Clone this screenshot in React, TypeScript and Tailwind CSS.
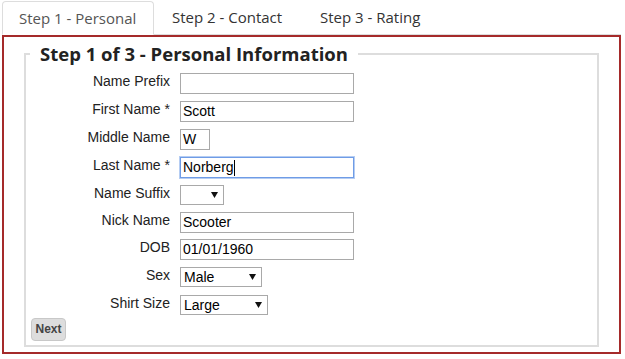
import { ReactNode } from 'react';

const arial = { fontFamily: '"Liberation Sans", Arial, sans-serif' };

function Caret() {
  return (
    <svg width="7" height="6" viewBox="0 0 7 6" className="shrink-0">
      <path d="M0 0 H7 L3.5 6 Z" fill="#111" />
    </svg>
  );
}

function Row({ label, h, children }: { label: string; h: string; children: ReactNode }) {
  return (
    <div className={`flex items-start ${h}`}>
      <label className="w-[144px] pr-0 text-right text-[14px] leading-4 text-[#222]">{label}</label>
      <div className="ml-[10px]">{children}</div>
    </div>
  );
}

function TextBox({ value, w, focused }: { value: string; w: string; focused?: boolean }) {
  return (
    <div
      className={`${w} h-[21px] flex items-center pl-[2px] text-[14px] text-black bg-white ${
        focused ? 'border border-[#6f9ce6] shadow-[0_0_0_1px_#b5cdf3]' : 'border border-[#a9a9a9]'
      }`}
    >
      <span>{value}</span>
      {focused && <span className="w-px h-[16px] bg-black" />}
    </div>
  );
}

function SelectBox({ value, w }: { value: string; w: string }) {
  return (
    <div className={`${w} h-[20px] flex items-center justify-between pl-[3px] pr-[5px] border border-[#a9a9a9] bg-white text-[14px] text-black`}>
      <span>{value}</span>
      <Caret />
    </div>
  );
}

export default function App() {
  return (
    <div className="w-[625px] h-[359px] bg-white overflow-hidden">
      <div className="pt-[1px] pl-[2px] pr-[4px]">
        <div className="flex border-b border-[#ddd] h-[34px]" style={{ fontFamily: '"Open Sans", sans-serif' }}>
          <div className="w-[152px] h-[34px] border border-[#ddd] border-b-white rounded-t-[4px] bg-white pl-[16px] text-[15px] leading-[32px] text-[#555]">
            Step 1 - Personal
          </div>
          <div className="w-[148px] ml-[2px] pl-[16px] text-[15px] leading-[32px] text-[#333]">Step 2 - Contact</div>
          <div className="ml-[2px] pl-[14px] text-[15px] leading-[32px] text-[#333]">Step 3 - Rating</div>
        </div>
        <div className="border-2 border-[#a52a2a] h-[319px] px-[20px] pt-[6px]" style={arial}>
          <fieldset className="border-2 border-[#ddd] h-[304px] pl-[4px] pt-[8px]">
            <legend
              className="px-[10px] text-[18.5px] font-bold leading-[22px] text-[#222]"
              style={{ fontFamily: '"Open Sans", sans-serif' }}
            >
              Step 1 of 3 - Personal Information
            </legend>
            <div className="flex flex-col -ml-[4px]">
              <Row label="Name Prefix" h="h-[28px]"><TextBox value="" w="w-[174px]" /></Row>
              <Row label="First Name *" h="h-[28px]"><TextBox value="Scott" w="w-[174px]" /></Row>
              <Row label="Middle Name" h="h-[28px]"><TextBox value="W" w="w-[30px]" /></Row>
              <Row label="Last Name *" h="h-[28px]"><TextBox value="Norberg" w="w-[174px]" focused /></Row>
              <Row label="Name Suffix" h="h-[27px]"><SelectBox value="" w="w-[44px]" /></Row>
              <Row label="Nick Name" h="h-[27px]"><TextBox value="Scooter" w="w-[174px]" /></Row>
              <Row label="DOB" h="h-[28px]"><TextBox value="01/01/1960" w="w-[174px]" /></Row>
              <Row label="Sex" h="h-[28px]"><SelectBox value="Male" w="w-[82px]" /></Row>
              <Row label="Shirt Size" h="h-[21px]"><SelectBox value="Large" w="w-[88px]" /></Row>
            </div>
            <button className="ml-[1px] w-[35px] h-[23px] rounded-[4px] border border-[#c8c8c8] bg-[#ddd] text-[12px] font-bold text-[#444]">
              Next
            </button>
          </fieldset>
        </div>
      </div>
    </div>
  );
}
